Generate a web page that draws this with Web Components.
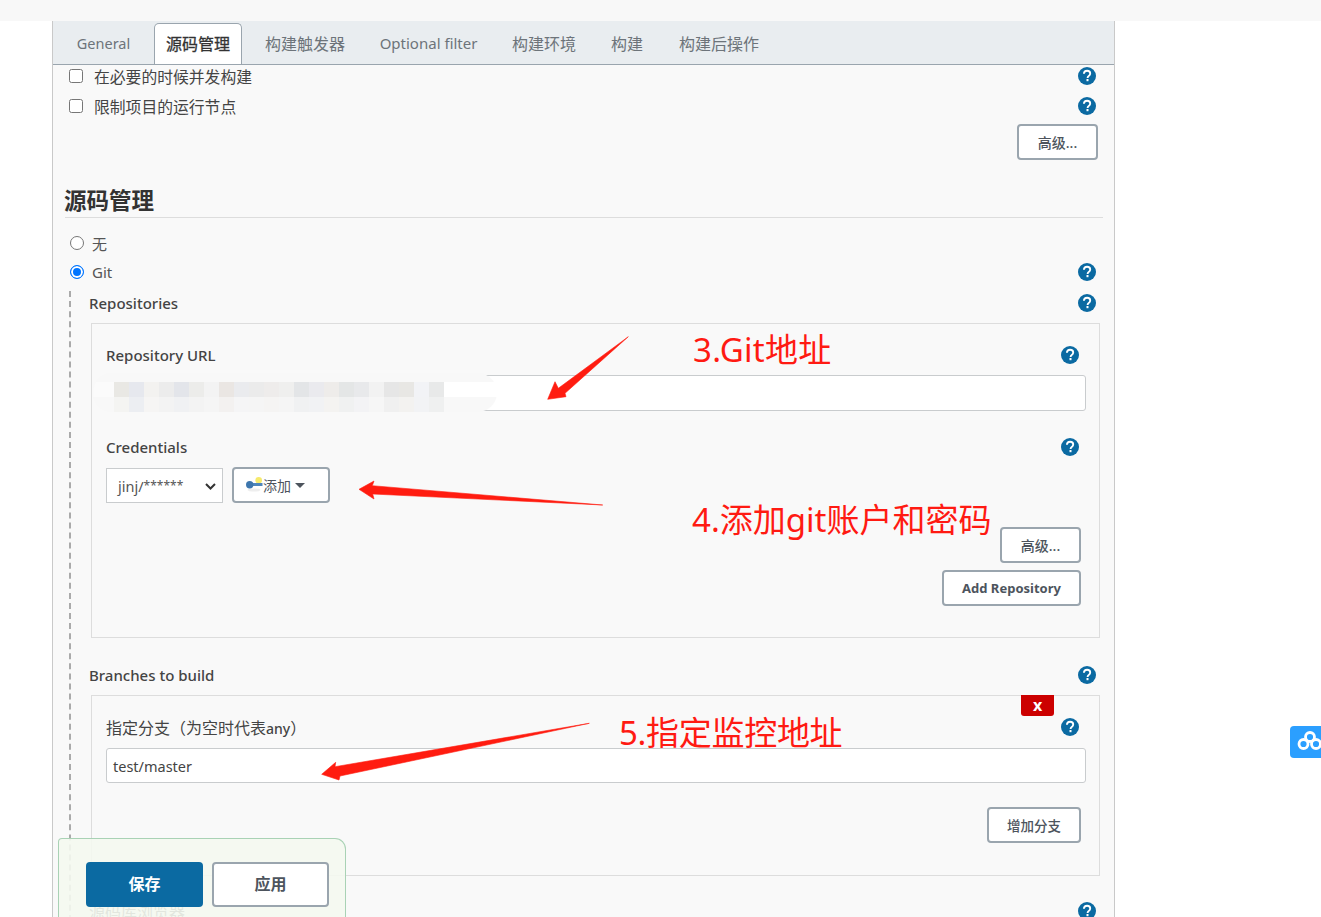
<!DOCTYPE html>
<html lang="zh">
<head>
<meta charset="utf-8">
<title>Jenkins</title>
<style>
html, body { margin: 0; padding: 0; height: 917px; overflow: hidden; background: #fff; }
body { position: relative; font: 15px "Noto Sans", "Noto Sans CJK SC", sans-serif; color: #333; }
</style>
</head>
<body>
<jk-page>
  <jk-tabs slot="tabs"></jk-tabs>
  <jk-check label="在必要的时候并发构建" style="height:22px;margin-bottom:4px"></jk-check>
  <jk-check label="限制项目的运行节点"></jk-check>
  <jk-actions style="margin-top:3px;padding-right:5px"><jk-button>高级...</jk-button></jk-actions>
  <jk-heading>源码管理</jk-heading>
  <jk-radio label="无" style="margin-top:11px"></jk-radio>
  <jk-radio label="Git" checked help style="margin-top:1px"></jk-radio>
  <jk-nest>
    <jk-row style="height:24px;margin-bottom:8px">Repositories</jk-row>
    <jk-box>
      <jk-row inner style="margin-top:18px">Repository URL</jk-row>
      <jk-input style="margin-top:7px;height:36px"></jk-input>
      <jk-mosaic></jk-mosaic>
      <jk-row inner style="margin-top:23px">Credentials</jk-row>
      <jk-creds style="margin-top:7px"></jk-creds>
      <jk-actions style="margin-top:24px;padding-right:5px"><jk-button>高级...</jk-button></jk-actions>
      <jk-actions style="margin-top:7px;padding-right:5px;padding-bottom:31px"><jk-button bold wide>Add Repository</jk-button></jk-actions>
    </jk-box>
    <jk-row style="margin-top:24px;margin-bottom:7px">Branches to build</jk-row>
    <jk-box>
      <jk-delete>x</jk-delete>
      <jk-row inner style="margin-top:18px;font-size:16px;font-weight:400">指定分支（为空时代表<span style="font-size:14px;font-weight:500">any</span>）</jk-row>
      <jk-input value="test/master" style="margin-top:8px;height:35px"></jk-input>
      <jk-actions style="margin-top:24px;padding-right:5px;padding-bottom:32px"><jk-button narrow>增加分支</jk-button></jk-actions>
    </jk-box>
    <jk-row style="margin-top:22px;font-size:16px;font-weight:400">源码库浏览器</jk-row>
  </jk-nest>
</jk-page>
<jk-savebar></jk-savebar>
<jk-notes></jk-notes>
<jk-cloud></jk-cloud>

<script>
const fontStack = '"Noto Sans", "Noto Sans CJK SC", sans-serif';

const helpIcon = `<svg width="18" height="18" viewBox="0 0 18 18" style="display:block"><circle cx="9" cy="9" r="9" fill="#0b6aa2"/><path d="M5.9 6.7C6 4.9 7.3 3.8 9.1 3.8c1.800 0 3.100 1.100 3.100 2.700 0 1.200-.6 1.900-1.500 2.500-.9.6-1.100.9-1.100 1.900" fill="none" stroke="#fff" stroke-width="1.900"/><rect x="8.500" y="12" width="2" height="2.200" fill="#fff"/></svg>`;

class jk_base extends HTMLElement {
    constructor() {
        super();
        this.attachShadow({ mode: 'open' });
    }
    connectedCallback() {
        this.shadowRoot.innerHTML = this.template();
    }
}

class jk_help extends jk_base {
    template() {
        return `<style>:host{display:block;width:18px;height:18px;flex:none}</style>${helpIcon}`;
    }
}

class jk_page extends jk_base {
    template() {
        return `<style>
        :host { display: block; margin: 0 0 0 52px; width: 1061px; height: 917px; border: solid #c9c9c9; border-width: 0 1px; background: #f9f9f9; }
        .strip { position: absolute; left: 0; top: 0; width: 1321px; height: 21px; background: #f8f8f8; }
        .head { padding-top: 21px; }
        main { padding: 0 11px 0 12px; }
        </style>
        <div class="strip"></div>
        <div class="head"><slot name="tabs"></slot></div>
        <main><slot></slot></main>`;
    }
}

class jk_tabs extends jk_base {
    template() {
        // name, gap before it, text width, font size
        const names = [['General', 0, 53, 14.5], ['源码管理', 24, 88, 16], ['构建触发器', 23, 80, 16], ['Optional filter', 35, 97, 15], ['构建环境', 35, 64, 16], ['构建', 35, 32, 16], ['构建后操作', 36, 80, 16]];
        const items = names.map((n, i) => `<a class="${i === 1 ? 'on' : ''}" style="margin-left:${n[1]}px;width:${n[2]}px;font-size:${n[3]}px">${n[0]}</a>`).join('');
        return `<style>
        :host { display: block; height: 43px; background: #e9edf0; border-bottom: 1px solid #9aa5ae; font: 16px ${fontStack}; }
        nav { display: flex; height: 43px; padding-left: 24px; box-sizing: border-box; align-items: flex-end; }
        a { display: flex; flex: none; box-sizing: border-box; align-items: center; justify-content: center; height: 41px; padding-bottom: 2px; white-space: nowrap; color: #6d747a; }
        a.on { background: #fff; color: #333; border: 1px solid #9aa5ae; border-bottom: 0; border-radius: 5px 5px 0 0; -webkit-text-stroke: .3px #333; }
        </style><nav>${items}</nav>`;
    }
}

class jk_check extends jk_base {
    template() {
        return `<style>
        :host { display: flex; align-items: center; height: 30px; padding: 0 7px 0 4px; font: 15.800px ${fontStack}; color: #444; }
        i { width: 12px; height: 12px; border: 1px solid #767676; border-radius: 2.500px; background: #fff; }
        span { margin-left: 11px; flex: 1; }
        </style><i></i><span>${this.getAttribute('label')}</span><jk-help></jk-help>`;
    }
}

class jk_radio extends jk_base {
    template() {
        const on = this.hasAttribute('checked');
        return `<style>
        :host { display: flex; align-items: center; height: 28px; padding: 0 7px 0 5px; font: 15px ${fontStack}; color: #555; }
        i { box-sizing: border-box; width: 14px; height: 14px; border-radius: 50%; background: #fff; border: 1px solid #767676; }
        i.on { border: 1.500px solid #0075ff; background: #0075ff; box-shadow: inset 0 0 0 2px #fff; }
        span { margin-left: 8px; flex: 1; }
        </style><i class="${on ? 'on' : ''}"></i><span>${this.getAttribute('label')}</span>${this.hasAttribute('help') ? '<jk-help></jk-help>' : ''}`;
    }
}

class jk_actions extends jk_base {
    template() {
        return `<style>:host{display:flex;justify-content:flex-end}</style><slot></slot>`;
    }
}

class jk_button extends jk_base {
    template() {
        const w = this.hasAttribute('wide') ? 139 : this.hasAttribute('narrow') ? 94 : 81;
        const font = this.hasAttribute('bold') ? '700 13px' : this.hasAttribute('narrow') ? '500 13.500px' : '500 14px';
        return `<style>
        :host { display: flex; box-sizing: border-box; width: ${w}px; height: 36px; align-items: center; justify-content: center; background: #fff; border: 2px solid #9aa5ae; border-radius: 4px; font: ${font} ${fontStack}; color: #4d545d; }
        </style><slot></slot>`;
    }
}

class jk_heading extends jk_base {
    template() {
        return `<style>
        :host { display: block; height: 58px; box-sizing: border-box; padding-top: 27px; border-bottom: 1px solid #ddd; font: 700 22.500px/28px ${fontStack}; color: #333; }
        div { margin-left: -1px; }
        </style><div><slot></slot></div>`;
    }
}

class jk_nest extends jk_base {
    template() {
        return `<style>
        :host { display: block; margin: 5px 0 0 4px; padding-left: 18px; border-left: 2px dashed #aaa; height: 640px; }
        </style><slot></slot>`;
    }
}

class jk_row extends jk_base {
    template() {
        return `<style>
        :host { display: flex; align-items: center; height: 26px; padding-right: 7px; font: 500 15px ${fontStack}; color: #444; }
        div { flex: 1; }
        </style><div><slot></slot></div><jk-help></jk-help>`;
    }
}

class jk_box extends jk_base {
    template() {
        return `<style>
        :host { display: block; position: relative; margin: 0 3px 0 2px; padding: 0 13px 0 14px; border: 1px solid #ddd; }
        .pad { height: 0; overflow: hidden; padding-top: .1px; margin-bottom: -.1px; }
        </style><div class="pad"></div><slot></slot><div class="pad"></div>`;
    }
}

class jk_input extends jk_base {
    template() {
        const v = this.getAttribute('value') || '';
        return `<style>
        :host { display: flex; align-items: center; box-sizing: border-box; background: #fff; border: 1px solid #c9ccce; border-radius: 3px; padding-left: 6px; font: 14.500px ${fontStack}; color: #444; }
        </style><span>${v}</span>`;
    }
}

class jk_mosaic extends jk_base {
    template() {
        const top = ['e9e8e4','e6e8ee','f3f2f0','ececec','e3e5ea','ececea','f3f3f3','eae6e3','eaebee','ebebeb','eeeceb','efefee','e3e5e7','eaeaee','eeecea','e4e6e6','e8e9eb','f2f2f2','e6e6e6','e8e7e4','f2f3f6','e8e9e9'];
        const bot = ['f4f4f2','eceef2','f6f5f4','f3f3f3','f0f1f3','f3f3f3','f5f5f5','f3f1f0','f5f5f6','f5f5f5','f5f4f3','f5f5f5','f0f1f2','f1f2f4','f4f3f1','f0f1f1','f3f3f5','f6f6f6','f0f0f0','f3f2f0','f2f3f5','eff0f0'];
        const cells = top.concat(bot).map(c => `<b style="background:#${c}"></b>`).join('');
        return `<style>
        :host { display: block; height: 0; position: relative; }
        .veil { position: absolute; left: -13px; top: -38px; width: 404px; height: 39px; border-radius: 20px;
            background: linear-gradient(#f8f8f8 23%, #fbfbfb 23%, #fbfbfb 62%, #f8f8f8 62%) left / 50% 100% no-repeat, linear-gradient(#f8f8f8 23%, #fff 23%, #fff 62%, #f8f8f8 62%); }
        .grid { position: absolute; left: 8px; top: -29px; display: grid; grid-template-columns: repeat(22, 15px); grid-auto-rows: 15px; }
        b { display: block; }
        </style><div class="veil"></div><div class="grid">${cells}</div>`;
    }
}

class jk_creds extends jk_base {
    template() {
        return `<style>
        :host { display: flex; align-items: center; height: 36px; gap: 9px; font: 14.500px ${fontStack}; color: #555; }
        .sel { box-sizing: border-box; width: 117px; height: 35px; margin-top: 1px; background: #fff; border: 1px solid #c9ccce; padding-left: 11px; display: flex; align-items: center; position: relative; white-space: pre; }
        .sel em { font: 12px ${fontStack}; position: relative; top: -2px; }
        .sel svg { position: absolute; right: 6px; top: 14px; }
        .add { box-sizing: border-box; width: 98px; height: 36px; background: #fff; border: 2px solid #9aa5ae; border-radius: 4px; display: flex; align-items: center; padding-left: 12px; font: 14px ${fontStack}; color: #4d545d; }
        .caret { width: 0; height: 0; border: 5px solid transparent; border-top-color: #4d545d; border-bottom: 0; margin-left: 4px; }
        </style>
        <div class="sel"><span>jinj/<em>******</em></span><svg width="11" height="7" viewBox="0 0 11 7"><path d="M1 1l4.500 4.500L10 1" fill="none" stroke="#333" stroke-width="2"/></svg></div>
        <div class="add"><svg width="17" height="16" viewBox="0 0 17 16" style="flex:none"><ellipse cx="8" cy="13" rx="6.500" ry="1.600" fill="#eeeeee"/><circle cx="12.700" cy="3.300" r="3.300" fill="#f6ea6c"/><rect x="4" y="6" width="12.500" height="3" fill="#4f86bb"/><circle cx="3.700" cy="7.700" r="3.700" fill="#3d76ad"/></svg><span>添加</span><i class="caret"></i></div>`;
    }
}

class jk_delete extends jk_base {
    template() {
        return `<style>
        :host { position: absolute; right: 45px; top: -1px; width: 33px; height: 21px; background: #c00; border-radius: 0 0 3px 3px; color: #fff; font: 700 16px/20px ${fontStack}; text-align: center; }
        </style><slot></slot>`;
    }
}

class jk_savebar extends jk_base {
    template() {
        return `<style>
        :host { position: absolute; left: 58px; top: 838px; box-sizing: border-box; width: 288px; height: 79px; padding: 23px 0 0 27px; display: flex; gap: 9px; align-items: flex-start; background: rgba(244,248,239,.9); border: 1px solid #a9d2b5; border-bottom: 0; border-radius: 4px 11px 0 0; font: 700 16px ${fontStack}; }
        a { box-sizing: border-box; width: 117px; height: 45px; padding-bottom: 3px; display: flex; align-items: center; justify-content: center; border-radius: 4px; }
        .save { background: #0b6aa2; color: #fff; }
        .apply { background: #fff; color: #4d545d; border: 2px solid #9aa5ae; }
        </style><a class="save">保存</a><a class="apply">应用</a>`;
    }
}

class jk_notes extends jk_base {
    template() {
        return `<style>
        :host { position: absolute; left: 0; top: 0; width: 1321px; height: 917px; pointer-events: none; font: 33px/46px ${fontStack}; color: #ff1a12; }
        span { position: absolute; white-space: nowrap; }
        svg { position: absolute; left: 0; top: 0; }
        </style>
        <svg width="1321" height="917" viewBox="0 0 1321 917" fill="#ff1c10" stroke="#ff1c10" stroke-width=".6">
          <polygon points="547.700,399.300 555,381.700 558.300,388.300 628.300,336.700 565,393.300 566,396.700"/>
          <polygon points="359,489.300 374,481 372.300,485.700 602.700,505 372.700,494 374,499"/>
          <polygon points="321.700,774.300 335.700,762.300 335,766.700 589.300,723.300 340,776 339,780"/>
        </svg>
        <span style="left:693px;top:327px;letter-spacing:.3px">3.Git地址</span>
        <span style="left:692px;top:497px">4.添加git账户和密码</span>
        <span style="left:619px;top:710px;letter-spacing:-.3px">5.指定监控地址</span>`;
    }
}

class jk_cloud extends jk_base {
    template() {
        return `<style>
        :host { position: absolute; left: 1290px; top: 726px; width: 31px; height: 32px; background: #2b9fff; border-radius: 4px 0 0 4px; overflow: hidden; }
        svg { display: block; }
        </style>
        <svg width="31" height="32" viewBox="0 0 31 32" fill="none" stroke="#fff" stroke-width="2.800">
          <circle cx="20" cy="11" r="4.500"/>
          <circle cx="13.500" cy="18" r="4.500"/>
          <circle cx="26" cy="18" r="4.500"/>
        </svg>`;
    }
}

customElements.define('jk-help', jk_help);
customElements.define('jk-page', jk_page);
customElements.define('jk-tabs', jk_tabs);
customElements.define('jk-check', jk_check);
customElements.define('jk-radio', jk_radio);
customElements.define('jk-actions', jk_actions);
customElements.define('jk-button', jk_button);
customElements.define('jk-heading', jk_heading);
customElements.define('jk-nest', jk_nest);
customElements.define('jk-row', jk_row);
customElements.define('jk-box', jk_box);
customElements.define('jk-input', jk_input);
customElements.define('jk-mosaic', jk_mosaic);
customElements.define('jk-creds', jk_creds);
customElements.define('jk-delete', jk_delete);
customElements.define('jk-savebar', jk_savebar);
customElements.define('jk-notes', jk_notes);
customElements.define('jk-cloud', jk_cloud);
</script>
</body>
</html>
